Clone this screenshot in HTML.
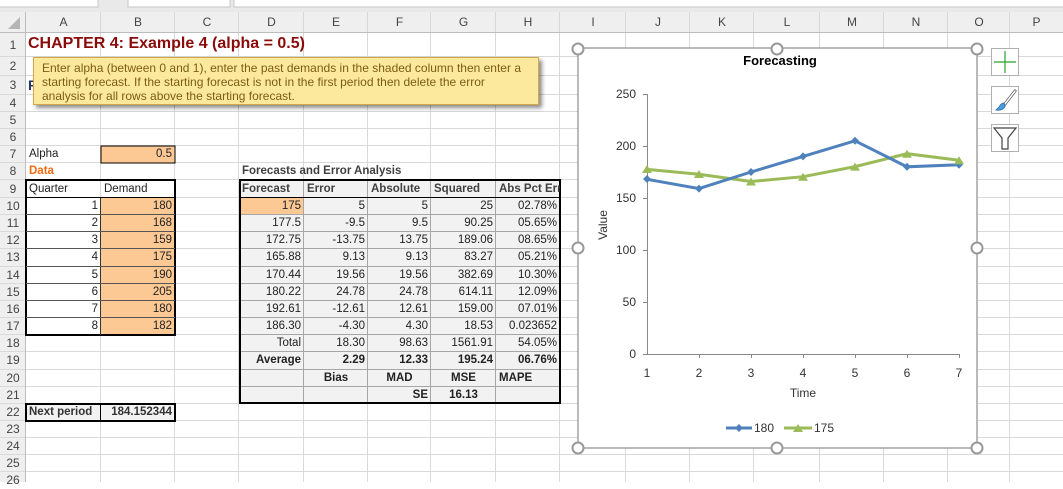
<!DOCTYPE html>
<html><head><meta charset="utf-8">
<style>
*{margin:0;padding:0;box-sizing:border-box}
body{width:1063px;height:482px;overflow:hidden;background:#fff;font-family:"Liberation Sans",Arial,sans-serif;position:relative}
.c{position:absolute;font-size:11.5px;line-height:17px;height:17px;color:#222;white-space:nowrap;overflow:hidden;padding:0 3px}
.r{text-align:right}.m{text-align:center}.b{font-weight:bold}
.rh{position:absolute;left:0;width:26px;text-align:center;font-size:12px;color:#444}
.ch{position:absolute;top:12px;height:21px;line-height:21px;text-align:center;font-size:12px;color:#444}
</style></head><body>
<svg width="1063" height="482" style="position:absolute;left:0;top:0">
<rect x="0" y="0" width="1063" height="12" fill="#e9e9e9"/>
<rect x="-2" y="-4" width="100" height="11" fill="#fff" stroke="#c6c6c6"/>
<rect x="128" y="-4" width="102" height="11" fill="#fff" stroke="#c6c6c6"/>
<rect x="234" y="-4" width="840" height="11" fill="#fff" stroke="#c6c6c6"/>
<rect x="0" y="12" width="1063" height="21" fill="#efefef"/>
<rect x="0" y="12" width="26" height="470" fill="#efefef"/>
<polygon points="20,17 20,29 8,29" fill="#b5b5b5"/>
<g stroke="#d9d9d9" stroke-width="1">
<line x1="0" y1="56.5" x2="1063" y2="56.5"/><line x1="0" y1="75.5" x2="1063" y2="75.5"/><line x1="0" y1="94.5" x2="1063" y2="94.5"/><line x1="0" y1="111.5" x2="1063" y2="111.5"/><line x1="0" y1="128.5" x2="1063" y2="128.5"/><line x1="0" y1="145.5" x2="1063" y2="145.5"/><line x1="0" y1="162.5" x2="1063" y2="162.5"/><line x1="0" y1="179.5" x2="1063" y2="179.5"/><line x1="0" y1="197.5" x2="1063" y2="197.5"/><line x1="0" y1="214.5" x2="1063" y2="214.5"/><line x1="0" y1="231.5" x2="1063" y2="231.5"/><line x1="0" y1="248.5" x2="1063" y2="248.5"/><line x1="0" y1="266.5" x2="1063" y2="266.5"/><line x1="0" y1="283.5" x2="1063" y2="283.5"/><line x1="0" y1="300.5" x2="1063" y2="300.5"/><line x1="0" y1="317.5" x2="1063" y2="317.5"/><line x1="0" y1="334.5" x2="1063" y2="334.5"/><line x1="0" y1="351.5" x2="1063" y2="351.5"/><line x1="0" y1="369.5" x2="1063" y2="369.5"/><line x1="0" y1="386.5" x2="1063" y2="386.5"/><line x1="0" y1="403.5" x2="1063" y2="403.5"/><line x1="0" y1="420.5" x2="1063" y2="420.5"/><line x1="0" y1="437.5" x2="1063" y2="437.5"/><line x1="0" y1="454.5" x2="1063" y2="454.5"/><line x1="0" y1="471.5" x2="1063" y2="471.5"/>
<line x1="25.5" y1="12" x2="25.5" y2="482"/><line x1="100.5" y1="12" x2="100.5" y2="482"/><line x1="174.5" y1="12" x2="174.5" y2="482"/><line x1="238.5" y1="12" x2="238.5" y2="482"/><line x1="303.5" y1="12" x2="303.5" y2="482"/><line x1="367.5" y1="12" x2="367.5" y2="482"/><line x1="430.5" y1="12" x2="430.5" y2="482"/><line x1="495.5" y1="12" x2="495.5" y2="482"/><line x1="559.5" y1="12" x2="559.5" y2="482"/><line x1="625.5" y1="12" x2="625.5" y2="482"/><line x1="689.5" y1="12" x2="689.5" y2="482"/><line x1="753.5" y1="12" x2="753.5" y2="482"/><line x1="819.5" y1="12" x2="819.5" y2="482"/><line x1="883.5" y1="12" x2="883.5" y2="482"/><line x1="947.5" y1="12" x2="947.5" y2="482"/><line x1="1009.5" y1="12" x2="1009.5" y2="482"/>
</g>
<line x1="0" y1="32.5" x2="1063" y2="32.5" stroke="#bdbdbd"/>
<line x1="25.5" y1="12" x2="25.5" y2="482" stroke="#bdbdbd"/>
<rect x="101" y="146" width="74" height="17" fill="#fcc894"/>
<rect x="101" y="198" width="74" height="137" fill="#fcc894"/>
<rect x="239" y="180" width="321" height="223" fill="#f2f2f2"/>
<rect x="239" y="198" width="65" height="17" fill="#fcc894"/>
<rect x="26" y="404" width="149" height="17" fill="#f2f2f2"/>
<g stroke="#a6a6a6">
<line x1="303.5" y1="180" x2="303.5" y2="403"/><line x1="367.5" y1="180" x2="367.5" y2="403"/><line x1="430.5" y1="180" x2="430.5" y2="403"/><line x1="495.5" y1="180" x2="495.5" y2="403"/>
<line x1="239" y1="214.5" x2="560" y2="214.5"/><line x1="239" y1="231.5" x2="560" y2="231.5"/><line x1="239" y1="248.5" x2="560" y2="248.5"/><line x1="239" y1="266.5" x2="560" y2="266.5"/><line x1="239" y1="283.5" x2="560" y2="283.5"/><line x1="239" y1="300.5" x2="560" y2="300.5"/><line x1="239" y1="317.5" x2="560" y2="317.5"/><line x1="239" y1="334.5" x2="560" y2="334.5"/><line x1="239" y1="351.5" x2="560" y2="351.5"/><line x1="239" y1="369.5" x2="560" y2="369.5"/><line x1="239" y1="386.5" x2="560" y2="386.5"/>
</g>
<g fill="none" stroke="#000">
<rect x="101" y="146" width="74" height="17" stroke-width="1"/>
<rect x="26" y="180" width="149" height="155" stroke-width="2"/>
<line x1="26" y1="197.5" x2="175" y2="197.5"/>
<line x1="100.5" y1="198" x2="100.5" y2="335" stroke="#333"/>
<g stroke="#555"><line x1="26" y1="214.5" x2="175" y2="214.5"/><line x1="26" y1="231.5" x2="175" y2="231.5"/><line x1="26" y1="248.5" x2="175" y2="248.5"/><line x1="26" y1="266.5" x2="175" y2="266.5"/><line x1="26" y1="283.5" x2="175" y2="283.5"/><line x1="26" y1="300.5" x2="175" y2="300.5"/><line x1="26" y1="317.5" x2="175" y2="317.5"/></g>
<rect x="240" y="180" width="320" height="223" stroke-width="2"/>
<line x1="239" y1="197.5" x2="560" y2="197.5"/>
<rect x="26" y="404" width="149" height="17" stroke-width="2"/>
<line x1="100.5" y1="404" x2="100.5" y2="421"/>
</g>
</svg>

<div class="ch" style="left:26px;width:75px">A</div><div class="ch" style="left:101px;width:74px">B</div><div class="ch" style="left:175px;width:64px">C</div><div class="ch" style="left:239px;width:65px">D</div><div class="ch" style="left:304px;width:64px">E</div><div class="ch" style="left:368px;width:63px">F</div><div class="ch" style="left:431px;width:65px">G</div><div class="ch" style="left:496px;width:64px">H</div><div class="ch" style="left:560px;width:66px">I</div><div class="ch" style="left:626px;width:64px">J</div><div class="ch" style="left:690px;width:64px">K</div><div class="ch" style="left:754px;width:66px">L</div><div class="ch" style="left:820px;width:64px">M</div><div class="ch" style="left:884px;width:64px">N</div><div class="ch" style="left:948px;width:62px">O</div><div class="ch" style="left:1010px;width:53px">P</div>

<div class="rh" style="top:33px;line-height:24px">1</div><div class="rh" style="top:57px;line-height:19px">2</div><div class="rh" style="top:76px;line-height:19px">3</div><div class="rh" style="top:95px;line-height:17px">4</div><div class="rh" style="top:112px;line-height:17px">5</div><div class="rh" style="top:129px;line-height:17px">6</div><div class="rh" style="top:146px;line-height:17px">7</div><div class="rh" style="top:163px;line-height:17px">8</div><div class="rh" style="top:180px;line-height:18px">9</div><div class="rh" style="top:198px;line-height:17px">10</div><div class="rh" style="top:215px;line-height:17px">11</div><div class="rh" style="top:232px;line-height:17px">12</div><div class="rh" style="top:249px;line-height:17px">13</div><div class="rh" style="top:267px;line-height:17px">14</div><div class="rh" style="top:284px;line-height:17px">15</div><div class="rh" style="top:301px;line-height:17px">16</div><div class="rh" style="top:318px;line-height:17px">17</div><div class="rh" style="top:335px;line-height:17px">18</div><div class="rh" style="top:352px;line-height:17px">19</div><div class="rh" style="top:370px;line-height:17px">20</div><div class="rh" style="top:387px;line-height:17px">21</div><div class="rh" style="top:404px;line-height:17px">22</div><div class="rh" style="top:421px;line-height:17px">23</div><div class="rh" style="top:438px;line-height:17px">24</div><div class="rh" style="top:455px;line-height:17px">25</div><div class="rh" style="top:472px;line-height:17px">26</div>

<div style="position:absolute;left:28px;top:35px;font-size:16px;font-weight:bold;color:#8b0a0a;white-space:nowrap">CHAPTER 4: Example 4 (alpha = 0.5)</div>
<div style="position:absolute;left:28px;top:77px;font-size:14px;font-weight:bold;color:#1f3864">F</div>

<div class="c" style="left:26px;top:146px;width:75px">Alpha</div>
<div class="c r" style="left:101px;top:146px;width:74px">0.5</div>
<div class="c b" style="left:26px;top:163px;width:75px;color:#f26a10">Data</div>
<div class="c" style="left:26px;top:181px;width:75px">Quarter</div>
<div class="c" style="left:101px;top:181px;width:74px">Demand</div>

<div class="c r" style="left:26px;top:198px;width:75px">1</div><div class="c r" style="left:101px;top:198px;width:74px">180</div>
<div class="c r" style="left:26px;top:215px;width:75px">2</div><div class="c r" style="left:101px;top:215px;width:74px">168</div>
<div class="c r" style="left:26px;top:232px;width:75px">3</div><div class="c r" style="left:101px;top:232px;width:74px">159</div>
<div class="c r" style="left:26px;top:249px;width:75px">4</div><div class="c r" style="left:101px;top:249px;width:74px">175</div>
<div class="c r" style="left:26px;top:267px;width:75px">5</div><div class="c r" style="left:101px;top:267px;width:74px">190</div>
<div class="c r" style="left:26px;top:284px;width:75px">6</div><div class="c r" style="left:101px;top:284px;width:74px">205</div>
<div class="c r" style="left:26px;top:301px;width:75px">7</div><div class="c r" style="left:101px;top:301px;width:74px">180</div>
<div class="c r" style="left:26px;top:318px;width:75px">8</div><div class="c r" style="left:101px;top:318px;width:74px">182</div>
<div class="c b" style="left:26px;top:404px;width:75px;color:#333">Next period</div>
<div class="c r b" style="left:101px;top:404px;width:74px;color:#333">184.152344</div>

<div class="c b" style="left:239px;top:163px;width:200px;color:#404040">Forecasts and Error Analysis</div>
<div class="c b" style="left:239px;top:181px;width:65px;color:#404040">Forecast</div><div class="c b" style="left:304px;top:181px;width:64px;color:#404040">Error</div><div class="c b" style="left:368px;top:181px;width:63px;color:#404040">Absolute</div><div class="c b" style="left:431px;top:181px;width:65px;color:#404040">Squared</div><div class="c b" style="left:496px;top:181px;width:64px;color:#404040">Abs Pct Err</div>

<div class="c r" style="left:239px;top:198px;width:65px">175</div><div class="c r" style="left:304px;top:198px;width:64px">5</div><div class="c r" style="left:368px;top:198px;width:63px">5</div><div class="c r" style="left:431px;top:198px;width:65px">25</div><div class="c r" style="left:496px;top:198px;width:64px">02.78%</div>
<div class="c r" style="left:239px;top:215px;width:65px">177.5</div><div class="c r" style="left:304px;top:215px;width:64px">-9.5</div><div class="c r" style="left:368px;top:215px;width:63px">9.5</div><div class="c r" style="left:431px;top:215px;width:65px">90.25</div><div class="c r" style="left:496px;top:215px;width:64px">05.65%</div>
<div class="c r" style="left:239px;top:232px;width:65px">172.75</div><div class="c r" style="left:304px;top:232px;width:64px">-13.75</div><div class="c r" style="left:368px;top:232px;width:63px">13.75</div><div class="c r" style="left:431px;top:232px;width:65px">189.06</div><div class="c r" style="left:496px;top:232px;width:64px">08.65%</div>
<div class="c r" style="left:239px;top:249px;width:65px">165.88</div><div class="c r" style="left:304px;top:249px;width:64px">9.13</div><div class="c r" style="left:368px;top:249px;width:63px">9.13</div><div class="c r" style="left:431px;top:249px;width:65px">83.27</div><div class="c r" style="left:496px;top:249px;width:64px">05.21%</div>
<div class="c r" style="left:239px;top:267px;width:65px">170.44</div><div class="c r" style="left:304px;top:267px;width:64px">19.56</div><div class="c r" style="left:368px;top:267px;width:63px">19.56</div><div class="c r" style="left:431px;top:267px;width:65px">382.69</div><div class="c r" style="left:496px;top:267px;width:64px">10.30%</div>
<div class="c r" style="left:239px;top:284px;width:65px">180.22</div><div class="c r" style="left:304px;top:284px;width:64px">24.78</div><div class="c r" style="left:368px;top:284px;width:63px">24.78</div><div class="c r" style="left:431px;top:284px;width:65px">614.11</div><div class="c r" style="left:496px;top:284px;width:64px">12.09%</div>
<div class="c r" style="left:239px;top:301px;width:65px">192.61</div><div class="c r" style="left:304px;top:301px;width:64px">-12.61</div><div class="c r" style="left:368px;top:301px;width:63px">12.61</div><div class="c r" style="left:431px;top:301px;width:65px">159.00</div><div class="c r" style="left:496px;top:301px;width:64px">07.01%</div>
<div class="c r" style="left:239px;top:318px;width:65px">186.30</div><div class="c r" style="left:304px;top:318px;width:64px">-4.30</div><div class="c r" style="left:368px;top:318px;width:63px">4.30</div><div class="c r" style="left:431px;top:318px;width:65px">18.53</div><div class="c r" style="left:496px;top:318px;width:64px">0.023652</div>
<div class="c r" style="left:239px;top:335px;width:65px">Total</div><div class="c r" style="left:304px;top:335px;width:64px">18.30</div><div class="c r" style="left:368px;top:335px;width:63px">98.63</div><div class="c r" style="left:431px;top:335px;width:65px">1561.91</div><div class="c r" style="left:496px;top:335px;width:64px">54.05%</div>
<div class="c r b" style="left:239px;top:352px;width:65px">Average</div><div class="c r b" style="left:304px;top:352px;width:64px">2.29</div><div class="c r b" style="left:368px;top:352px;width:63px">12.33</div><div class="c r b" style="left:431px;top:352px;width:65px">195.24</div><div class="c r b" style="left:496px;top:352px;width:64px">06.76%</div>
<div class="c m b" style="left:304px;top:370px;width:64px">Bias</div><div class="c m b" style="left:368px;top:370px;width:63px">MAD</div><div class="c m b" style="left:431px;top:370px;width:65px">MSE</div><div class="c b" style="left:496px;top:370px;width:64px">MAPE</div>
<div class="c r b" style="left:368px;top:387px;width:63px">SE</div><div class="c m b" style="left:431px;top:387px;width:65px">16.13</div>

<div style="position:absolute;left:33px;top:57px;width:506px;height:48px;background:#fde99d;border:1px solid #d2a84a;box-shadow:3px 3px 4px rgba(0,0,0,0.45);padding:3px 8px;font-family:'Liberation Sans',Arial,sans-serif;font-size:12px;line-height:14px;color:#7b5d12">Enter alpha (between 0 and 1), enter the past demands in the shaded column then enter a starting forecast. If the starting forecast is not in the first period then delete the error analysis for all rows above the starting forecast.</div>

<svg width="1063" height="482" style="position:absolute;left:0;top:0">
<rect x="578" y="48" width="399" height="400" fill="#fff" stroke="#8c8c8c" stroke-width="1.2"/>
<text x="780" y="65" text-anchor="middle" font-family="Liberation Sans,Arial,sans-serif" font-size="13" font-weight="bold" fill="#000">Forecasting</text>
<g stroke="#888" stroke-width="1">
<line x1="647.5" y1="94" x2="647.5" y2="354"/><line x1="647" y1="354.5" x2="959" y2="354.5"/>
<line x1="643" y1="94.5" x2="647" y2="94.5"/><line x1="643" y1="146.5" x2="647" y2="146.5"/><line x1="643" y1="198.5" x2="647" y2="198.5"/><line x1="643" y1="250.5" x2="647" y2="250.5"/><line x1="643" y1="302.5" x2="647" y2="302.5"/><line x1="643" y1="354.5" x2="647" y2="354.5"/>
<line x1="699.5" y1="354" x2="699.5" y2="358"/><line x1="751.5" y1="354" x2="751.5" y2="358"/><line x1="803.5" y1="354" x2="803.5" y2="358"/><line x1="855.5" y1="354" x2="855.5" y2="358"/><line x1="907.5" y1="354" x2="907.5" y2="358"/><line x1="959.5" y1="354" x2="959.5" y2="358"/>
</g>
<g font-family="Liberation Sans,Arial,sans-serif" font-size="12" fill="#333" text-anchor="end">
<text x="636" y="98">250</text><text x="636" y="150">200</text><text x="636" y="202">150</text><text x="636" y="254">100</text><text x="636" y="306">50</text><text x="636" y="358">0</text>
</g>
<g font-family="Liberation Sans,Arial,sans-serif" font-size="12" fill="#333" text-anchor="middle">
<text x="647" y="377">1</text><text x="699" y="377">2</text><text x="751" y="377">3</text><text x="803" y="377">4</text><text x="855" y="377">5</text><text x="907" y="377">6</text><text x="959" y="377">7</text>
<text x="803" y="397">Time</text>
<text x="0" y="0" transform="translate(607,225) rotate(-90)">Value</text>
<text x="764" y="432" text-anchor="middle">180</text><text x="824" y="432" text-anchor="middle">175</text>
</g>
<polyline points="647,169.4 699,174.3 751,181.5 803,176.7 855,166.6 907,153.7 959,160.2" fill="none" stroke="#9bbb59" stroke-width="3"/>
<polyline points="647,179.3 699,188.6 751,172 803,156.4 855,140.8 907,166.8 959,164.7" fill="none" stroke="#4f81bd" stroke-width="3"/>
<g fill="#4f81bd"><path d="M647 175l4 4-4 4-4-4z"/><path d="M699 184.6l4 4-4 4-4-4z"/><path d="M751 168l4 4-4 4-4-4z"/><path d="M803 152.4l4 4-4 4-4-4z"/><path d="M855 136.8l4 4-4 4-4-4z"/><path d="M907 162.8l4 4-4 4-4-4z"/><path d="M959 160.7l4 4-4 4-4-4z"/></g>
<g fill="#9bbb59"><path d="M647 165l5 8h-10z"/><path d="M699 170l5 8h-10z"/><path d="M751 177.5l5 8h-10z"/><path d="M803 172.7l5 8h-10z"/><path d="M855 162.6l5 8h-10z"/><path d="M907 149.7l5 8h-10z"/><path d="M959 156.2l5 8h-10z"/></g>
<line x1="726" y1="428" x2="752" y2="428" stroke="#4f81bd" stroke-width="3"/><path d="M739 424l4 4-4 4-4-4z" fill="#4f81bd"/>
<line x1="784" y1="428" x2="812" y2="428" stroke="#9bbb59" stroke-width="3"/><path d="M798 424l5 8h-10z" fill="#9bbb59"/>
<g fill="#fff" stroke="#999" stroke-width="2">
<circle cx="578" cy="49" r="5.5"/><circle cx="777" cy="49" r="5.5"/><circle cx="977" cy="49" r="5.5"/>
<circle cx="578" cy="248" r="5.5"/><circle cx="977" cy="248" r="5.5"/>
<circle cx="578" cy="448" r="5.5"/><circle cx="777" cy="448" r="5.5"/><circle cx="977" cy="448" r="5.5"/>
</g>
<g fill="#fff" stroke="#b0b0b0"><rect x="991.5" y="48.5" width="27" height="27"/><rect x="991.5" y="86.5" width="27" height="27"/><rect x="991.5" y="124.5" width="27" height="27"/></g>
<g stroke="#2aa02a" stroke-width="1.2"><line x1="1005" y1="51" x2="1005" y2="73"/><line x1="994" y1="62" x2="1016" y2="62"/></g>
<path d="M1015 91 L1005 104" stroke="#555" stroke-width="3" stroke-linecap="round"/>
<path d="M1015 91 L1005 104" stroke="#fff" stroke-width="1.5" stroke-linecap="round"/>
<path d="M1004 103 q-3 0 -5 4 l-3 3 q5 1 8 -2 q2 -2 0 -5z" fill="#4a9be0" stroke="#2a6aa8" stroke-width="0.8"/>
<path d="M994 128 h22 l-8 10 v11 h-6 v-11 z" fill="#fff" stroke="#444" stroke-width="1.2"/>
</svg>
</body></html>
